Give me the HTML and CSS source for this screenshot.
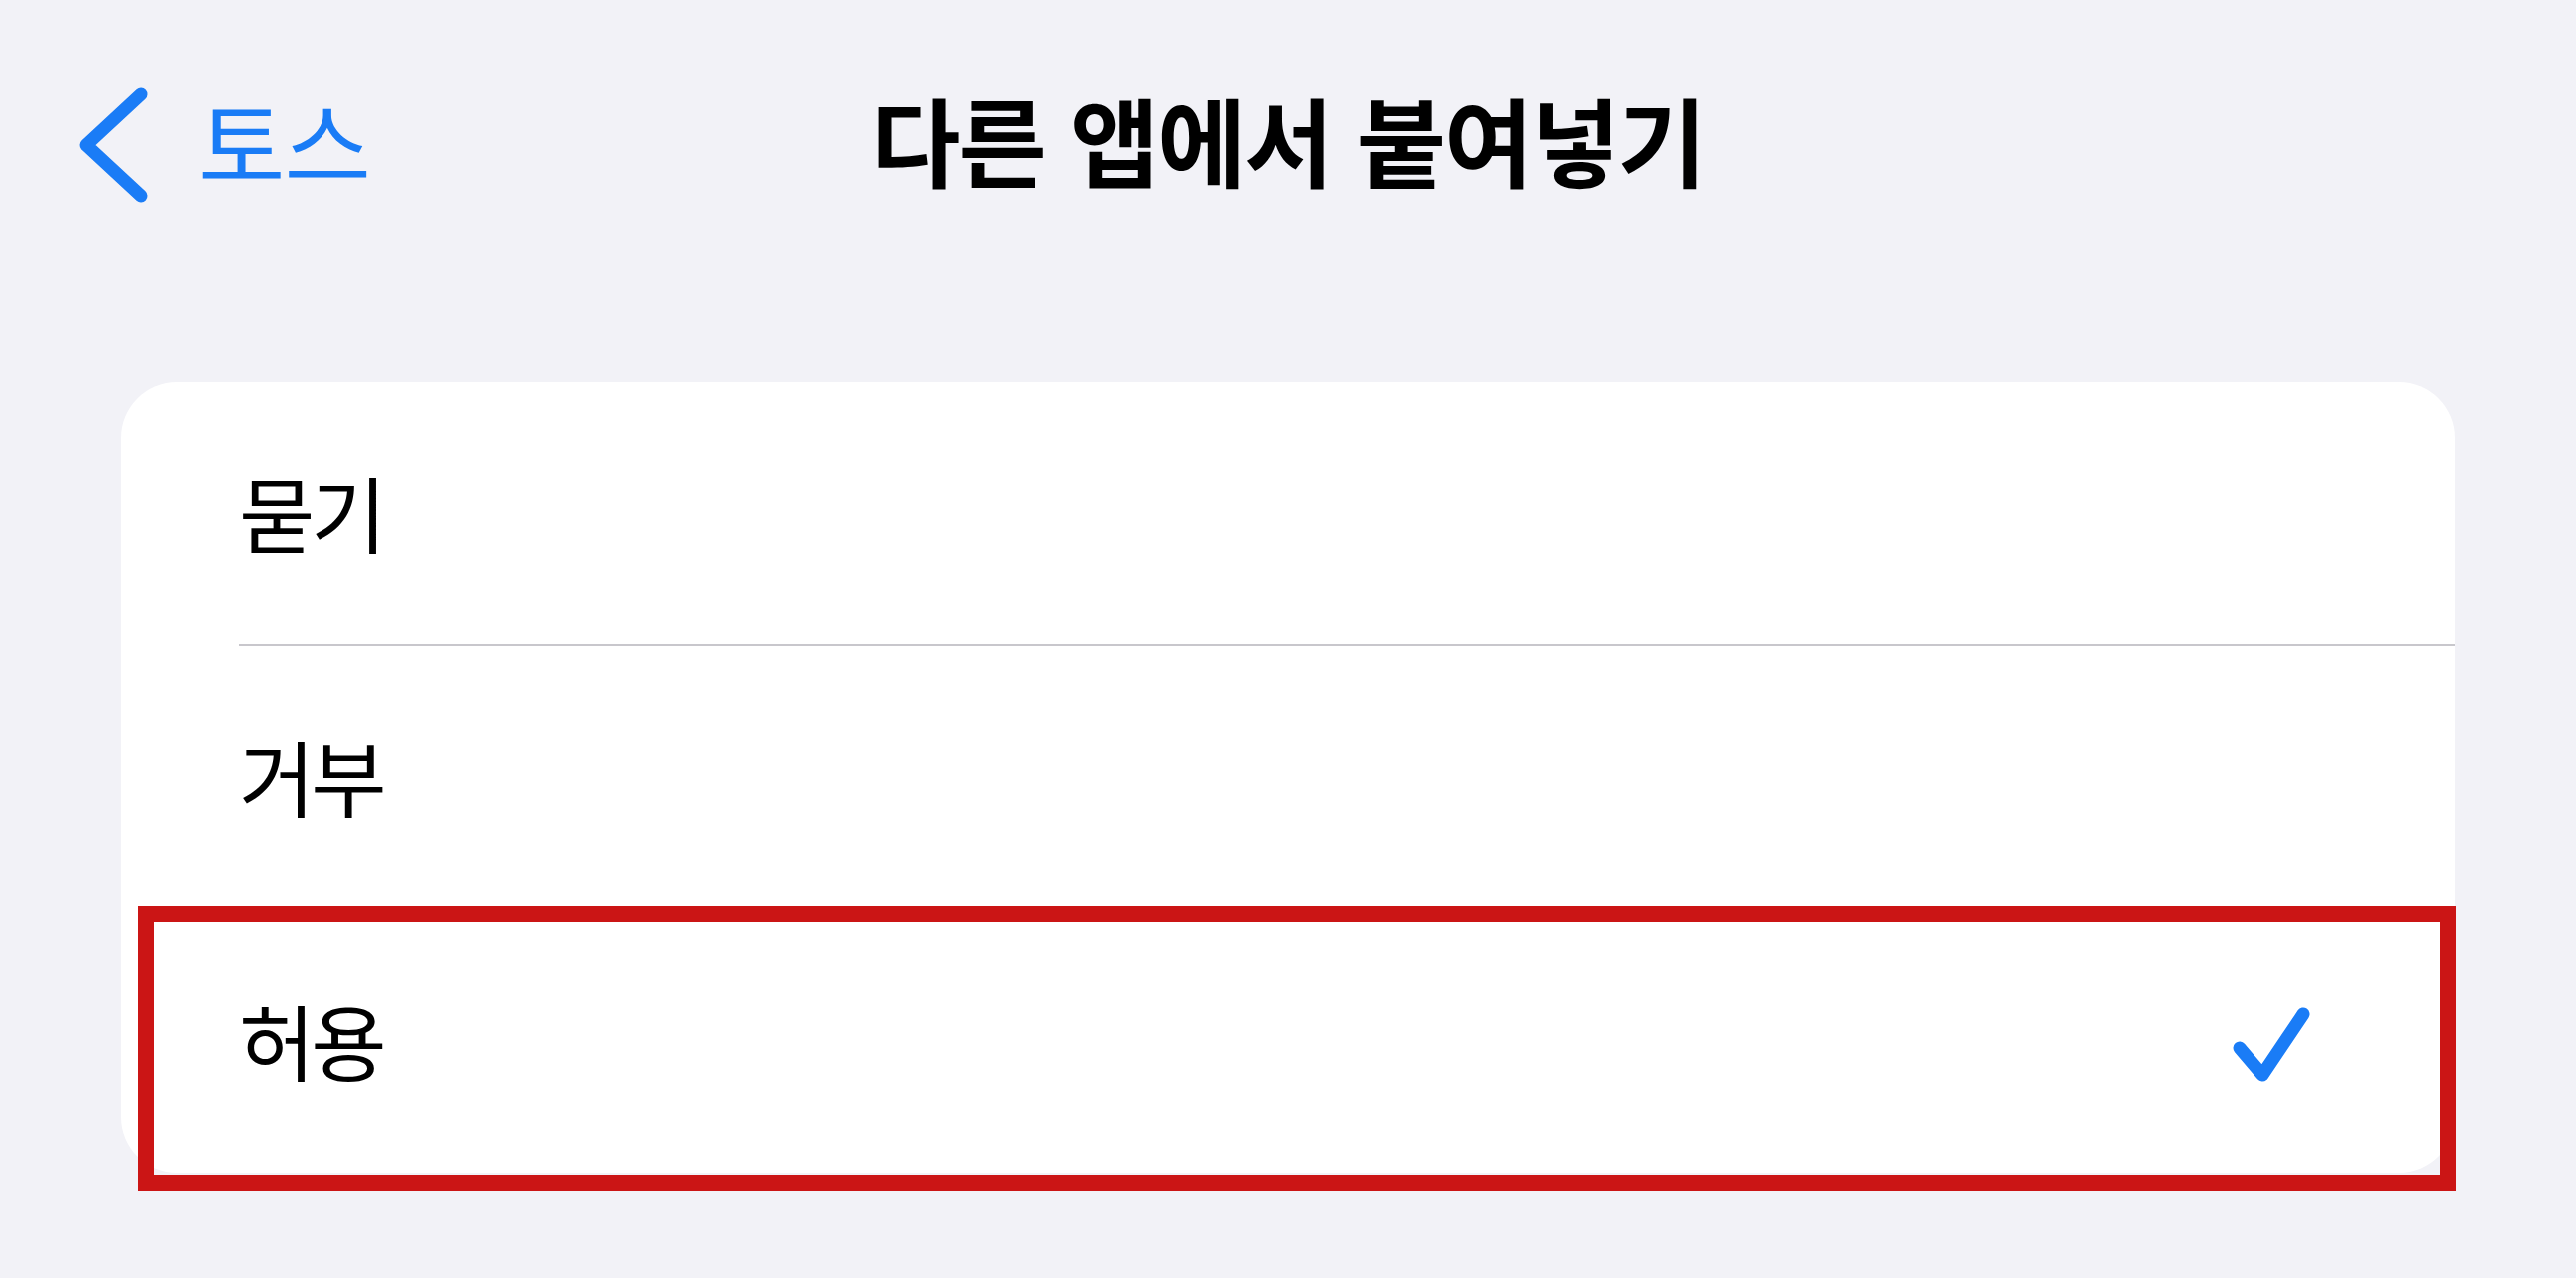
FILE: index.html
```html
<!DOCTYPE html>
<html lang="ko">
<head>
    <meta charset="UTF-8">
    <meta name="viewport" content="width=device-width, initial-scale=1.0">
    <title>다른 앱에서 붙여넣기</title>
    <link rel="stylesheet" href="styles.css">
</head>
<body>
    <header class="nav">
        <a class="back" href="#">
            <svg class="chevron" viewBox="0 0 80 128" width="80" height="128">
                <polyline points="67,13 12,64 67,115" />
            </svg>
            <span class="back-label">토스</span>
        </a>
        <h1 class="title">다른 앱에서 붙여넣기</h1>
        <div></div>
    </header>

    <ul class="card">
        <li class="row">
            <div class="row-inner"><span>묻기</span></div>
        </li>
        <li class="row">
            <div class="row-inner"><span>거부</span></div>
        </li>
        <li class="row selected">
            <div class="row-inner">
                <span>허용</span>
                <svg class="check" viewBox="0 0 84 84" width="84" height="84">
                    <polyline points="10,49 33,76 74,15" />
                </svg>
            </div>
            <!-- annotation box -->
            <div class="highlight"></div>
        </li>
    </ul>
</body>
</html>
```

FILE: styles.css
```css
html {
    background-color: #f2f2f7;
}
body {
    font-family: "Noto Sans CJK KR", sans-serif;
    background-color: #f2f2f7;
    color: #000;
    margin: 0;
    padding: 0 121px;
    min-height: 100vh;
}
.nav {
    display: grid;
    grid-template-columns: 1fr auto 1fr;
    align-items: center;
    height: 290px;
    margin: 0 -121px;
    padding: 0 74px;
}
.back {
    display: flex;
    align-items: center;
    gap: 44px;
    color: #1a7cf6;
    text-decoration: none;
}
.chevron polyline {
    fill: none;
    stroke: #1a7cf6;
    stroke-width: 13;
    stroke-linecap: round;
    stroke-linejoin: round;
}
.back-label {
    font-size: 95px;
    line-height: 1;
    letter-spacing: -1px;
    padding-bottom: 10px;
}
.title {
    margin: 0;
    font-size: 97px;
    font-weight: 700;
    line-height: 1;
    letter-spacing: -2px;
    padding-bottom: 16px;
}
.card {
    list-style: none;
    margin: 93px 0 0;
    padding: 0;
    background: #fff;
    border-radius: 56px;
}
.row {
    position: relative;
    padding-left: 118px;
}
.row-inner {
    display: flex;
    align-items: center;
    justify-content: space-between;
    box-sizing: border-box;
    height: 264px;
    padding-right: 142px;
    padding-bottom: 4px;
    border-bottom: 2px solid #c8c7cc;
    font-size: 83px;
    letter-spacing: -4px;
}
.row:last-child .row-inner {
    border-bottom: none;
}
.check {
    margin-top: 4px;
}
.check polyline {
    fill: none;
    stroke: #1a7cf6;
    stroke-width: 13;
    stroke-linecap: round;
    stroke-linejoin: round;
}
.highlight {
    position: absolute;
    left: 17px;
    right: -1px;
    top: -4px;
    bottom: -18px;
    border: 16px solid #cb1515;
}
```
